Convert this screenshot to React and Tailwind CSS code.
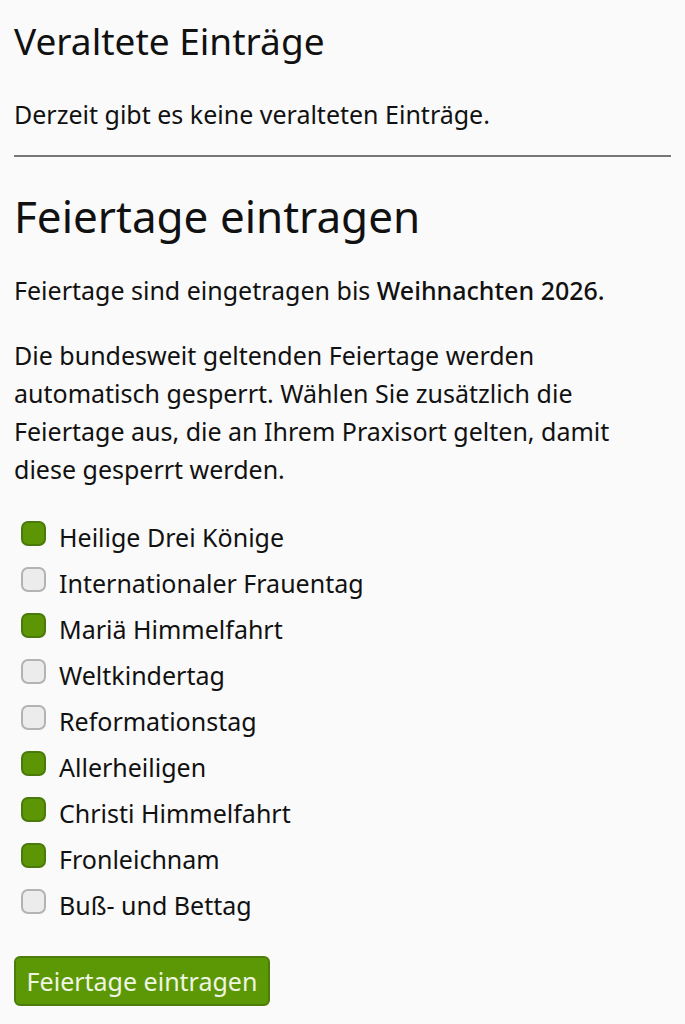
const holidays = [
  { name: "Heilige Drei Könige", checked: true },
  { name: "Internationaler Frauentag", checked: false },
  { name: "Mariä Himmelfahrt", checked: true },
  { name: "Weltkindertag", checked: false },
  { name: "Reformationstag", checked: false },
  { name: "Allerheiligen", checked: true },
  { name: "Christi Himmelfahrt", checked: true },
  { name: "Fronleichnam", checked: true },
  { name: "Buß- und Bettag", checked: false },
];

function Box({ checked }) {
  return checked ? (
    <span className="mt-[7px] block h-[25px] w-[25px] shrink-0 rounded-[7px] border-2 border-[#4a7a0a] bg-[#5c9606]" />
  ) : (
    <span className="mt-[7px] block h-[25px] w-[25px] shrink-0 rounded-[7px] border-2 border-[#b3b3b3] bg-[#ececec]" />
  );
}

export default function App() {
  return (
    <div className="min-h-screen bg-[#fafafa] px-[14px] text-[#111] [font-family:'Noto_Sans',sans-serif]">
      <h2 className="pt-[19px] text-[37px] leading-[44px]">Veraltete Einträge</h2>
      <p className="mt-[32px] text-[25px] leading-[38px]">Derzeit gibt es keine veralteten Einträge.</p>
      <hr className="mt-[22px] border-t-2 border-[#777]" />

      <h1 className="mt-[33px] text-[44px] leading-[52px]">Feiertage eintragen</h1>
      <p className="mt-[29px] text-[25px] leading-[38px]">
        Feiertage sind eingetragen bis <span className="font-medium">Weihnachten 2026.</span>
      </p>
      <p className="mt-[27px] text-[25px] leading-[38px]">
        Die bundesweit geltenden Feiertage werden automatisch gesperrt. Wählen Sie zusätzlich die
        Feiertage aus, die an Ihrem Praxisort gelten, damit diese gesperrt werden.
      </p>

      <ul className="mt-[26px] flex flex-col">
        {holidays.map((h) => (
          <li key={h.name} className="flex h-[46px] items-start gap-[13px] pl-[7px]">
            <Box checked={h.checked} />
            <span className="text-[25px] leading-[46px]">{h.name}</span>
          </li>
        ))}
      </ul>

      <button className="mt-[28px] h-[50px] w-[256px] rounded-[6px] border-2 border-[#4c7d0a] bg-[#5c9806] text-[25px] leading-none text-[#eef5e2]">
        Feiertage eintragen
      </button>
    </div>
  );
}
